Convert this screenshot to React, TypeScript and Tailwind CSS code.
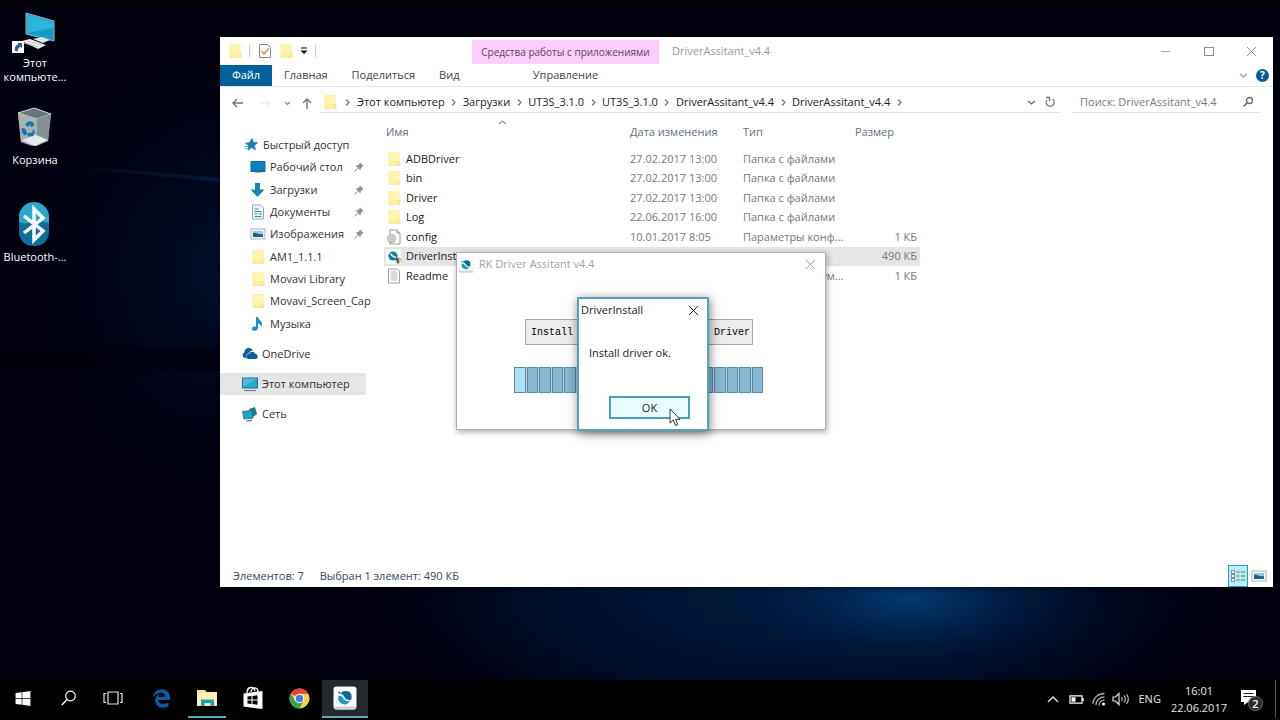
import type { ReactNode } from "react"
import { FaEdgeLegacy, FaWindows } from "react-icons/fa6"

type IconName =
  | "folder"
  | "config"
  | "app"
  | "text"
  | "star"
  | "desktop"
  | "download"
  | "document"
  | "picture"
  | "music"
  | "cloud"
  | "pc"
  | "network"

type FileRow = {
  name: string
  icon: IconName
  date: string
  type: string
  size: string
  selected?: boolean
}

const files: FileRow[] = [
  { name: "ADBDriver", icon: "folder", date: "27.02.2017 13:00", type: "Папка с файлами", size: "" },
  { name: "bin", icon: "folder", date: "27.02.2017 13:00", type: "Папка с файлами", size: "" },
  { name: "Driver", icon: "folder", date: "27.02.2017 13:00", type: "Папка с файлами", size: "" },
  { name: "Log", icon: "folder", date: "22.06.2017 16:00", type: "Папка с файлами", size: "" },
  { name: "config", icon: "config", date: "10.01.2017 8:05", type: "Параметры конф...", size: "1 КБ" },
  { name: "DriverInstall", icon: "app", date: "10.01.2017 8:08", type: "Приложение", size: "490 КБ", selected: true },
  { name: "Readme", icon: "text", date: "10.01.2017 8:05", type: "Текстовый докум...", size: "1 КБ" }
]

const quickAccess: { name: string; icon: IconName; pinned?: boolean }[] = [
  { name: "Рабочий стол", icon: "desktop", pinned: true },
  { name: "Загрузки", icon: "download", pinned: true },
  { name: "Документы", icon: "document", pinned: true },
  { name: "Изображения", icon: "picture", pinned: true },
  { name: "AM1_1.1.1", icon: "folder" },
  { name: "Movavi Library", icon: "folder" },
  { name: "Movavi_Screen_Cap", icon: "folder" },
  { name: "Музыка", icon: "music" }
]

const crumbs = ["Этот компьютер", "Загрузки", "UT3S_3.1.0", "UT3S_3.1.0", "DriverAssitant_v4.4", "DriverAssitant_v4.4"]

function Icon({ name }: { name: IconName }) {
  return (
    <svg viewBox="0 0 16 16" className="w-4 h-4 shrink-0" aria-hidden="true">
      {name === "folder" && (
        <>
          <path d="M2.500 1h11v14h-11z" fill="#fbefa0" />
          <path d="M2.500 1h10v9h-10z" fill="#fdf4b0" />
          <path d="M13 10h1.300v5H12z" fill="#f7e68c" />
          <path d="M2.500 14.300h11.500v.7H2.500z" fill="#f3e6a0" />
        </>
      )}
      {name === "config" && (
        <>
          <path d="M4 1h7l3 3v11H4z" fill="#fff" stroke="#9a9a9a" />
          <path d="M11 1v3h3" fill="none" stroke="#9a9a9a" />
          <circle cx="5.500" cy="9.500" r="4" fill="#e9ecec" stroke="#a0a8a8" />
          <path d="M3 8h5M3 10h5M4 12h3" stroke="#98a1a1" />
        </>
      )}
      {name === "app" && (
        <>
          <rect x="0" y="0" width="15" height="15" rx="2" fill="#fdfdfd" />
          <circle cx="7" cy="7" r="4.600" fill="#10809d" />
          <path d="M4 5.500c2-.8 2.500 3.500 6 2.500" stroke="#d8f1f7" strokeWidth="1.600" fill="none" />
          <path d="M10 9.500l2.500-1 2.500 1c0 3-1 4.500-2.500 5.500-1.500-1-2.500-2.500-2.500-5.500z" fill="#e3b63b" />
          <path d="M12.500 8.500V15c-1.500-1-2.500-2.500-2.500-5.500z" fill="#2a5c94" />
        </>
      )}
      {name === "text" && (
        <>
          <path d="M2.500 1h9l2 2v12h-11z" fill="#fff" stroke="#a2a2a2" />
          <path d="M4.500 4h6M4.500 6h7M4.500 8h7M4.500 10h7M4.500 12h7" stroke="#b4b4b4" />
        </>
      )}
      {name === "star" && (
        <>
          <path d="M9 1.500l1.500 4 4 .2-3.200 2.800 1.200 4.200L8.500 10.500 5 13.200l.8-4.300L2.500 6.200l4-.4z" fill="#1681ae" stroke="#1681ae" strokeWidth=".8" />
          <path d="M1 9.500h4M2 11.500h3" stroke="#6db6d2" />
        </>
      )}
      {name === "desktop" && (
        <>
          <rect x="0.500" y="2" width="15" height="11" rx="0.500" fill="#0a6fa8" />
          <path d="M1.500 3h13v8h-13z" fill="#0d7fbb" />
          <path d="M5 13h6" stroke="#5b6b75" />
        </>
      )}
      {name === "download" && <path d="M5 1h5v6.500h4.500L7.500 15 .5 7.500H5z" fill="#1784b3" />}
      {name === "document" && (
        <>
          <path d="M2.500 1h8l3 3v11h-11z" fill="#eef7fb" stroke="#8fabb8" />
          <path d="M4.500 5h4M4.500 7.500h7M4.500 10h3M9 10h3M4.500 12.500h7" stroke="#2f8fb5" strokeWidth="1.200" />
        </>
      )}
      {name === "picture" && (
        <>
          <rect x="1" y="3" width="14" height="10" fill="#f7fafb" stroke="#a8b7bd" />
          <path d="M3 5h10v6H3z" fill="#8fcbe6" />
          <path d="M3 7c3-1 5 2 10 1v3H3z" fill="#235f78" />
        </>
      )}
      {name === "music" && (
        <path
          d="M6 1h2c0 3 4 3 4 7 0 1-.4 2-1 3 0-2-1-3-3-3.500V12c0 1.600-1.500 2.800-3.200 2.800S2 14 2 12.700s1.300-2.200 3-2.200c.4 0 .7 0 1 .2z"
          fill="#1a8fc0"
        />
      )}
      {name === "cloud" && (
        <>
          <path d="M3 12a3 3 0 01-.5-5.800A4.500 4.500 0 0111 4.500c-2 0-3.500 1-4.200 2.800C4.500 7.500 3.500 9.500 4 12z" fill="#0c5f96" />
          <path d="M6.500 13a2.500 2.500 0 01.3-5A3.700 3.700 0 0113.500 8a2.600 2.600 0 01.5 5z" fill="#0c5f96" />
        </>
      )}
      {name === "pc" && (
        <>
          <rect x="0.500" y="2" width="15" height="10" fill="#2fa7ca" stroke="#2b6f8c" />
          <path d="M1 2.500h14L1 11z" fill="#4fbbd8" />
          <path d="M2 14.500h12" stroke="#6a8793" strokeWidth="1.200" />
        </>
      )}
      {name === "network" && (
        <>
          <path d="M7 3l6-2 2 7-4 3z" fill="#1b7f94" />
          <path d="M.5 5.500l9.500-1 1 7.500-9 1z" fill="#24a3c4" stroke="#1c6b88" strokeWidth=".8" />
          <path d="M4 15l6-.6" stroke="#4d7c8c" strokeWidth="1.200" />
        </>
      )}
    </svg>
  )
}

function Pin() {
  return (
    <svg viewBox="0 0 12 12" className="w-3 h-3 shrink-0" aria-hidden="true">
      <path d="M7 1.500l3.500 3.500-1 .5-1.700 1.700-.3 2.300L4.700 6.700 2.500 4.500l2.500-.3L6.600 2.500z" fill="#86959b" />
      <path d="M4.700 7.300L1.500 10.500" stroke="#86959b" />
    </svg>
  )
}

function Chevron({ className, d = "M3 1.500L6 4.500 3 7.500" }: { className: string; d?: string }) {
  return (
    <svg viewBox="0 0 9 9" className={`w-[9px] h-[9px] shrink-0 ${className}`} aria-hidden="true">
      <path d={d} fill="none" stroke="currentColor" strokeWidth="1.200" />
    </svg>
  )
}

function CloseGlyph() {
  return (
    <svg viewBox="0 0 11 11" className="w-[11px] h-[11px]" aria-hidden="true">
      <path d="M1 1l9 9M10 1l-9 9" stroke="currentColor" strokeWidth="1" />
    </svg>
  )
}

function Wallpaper() {
  return (
    <svg
      viewBox="0 0 1280 680"
      preserveAspectRatio="none"
      className="absolute inset-0 w-full h-full"
      aria-hidden="true"
    >
      <defs>
        <radialGradient id="glow">
          <stop offset="0" stopColor="#003a70" />
          <stop offset="0.300" stopColor="#002e60" stopOpacity="0.800" />
          <stop offset="1" stopColor="#001434" stopOpacity="0" />
        </radialGradient>
        <radialGradient id="haze">
          <stop offset="0" stopColor="#001c42" />
          <stop offset="0.600" stopColor="#00102c" stopOpacity="0.900" />
          <stop offset="1" stopColor="#000010" stopOpacity="0" />
        </radialGradient>
        <radialGradient id="dusk">
          <stop offset="0" stopColor="#00102a" />
          <stop offset="1" stopColor="#000010" stopOpacity="0" />
        </radialGradient>
        <linearGradient id="beam">
          <stop offset="0" stopColor="#021a38" stopOpacity="0" />
          <stop offset="1" stopColor="#021a38" />
        </linearGradient>
      </defs>
      <rect width="1280" height="680" fill="#00000f" />
      <ellipse cx="800" cy="590" rx="450" ry="170" fill="url(#haze)" />
      <ellipse cx="910" cy="598" rx="190" ry="75" fill="url(#glow)" />
      <ellipse cx="225" cy="270" rx="220" ry="250" fill="url(#dusk)" />
      <path d="M60 164L220 178V182L60 166z" fill="url(#beam)" />
      <rect y="347" width="220" height="24" fill="#00000c" opacity="0.600" />
      <rect width="1280" height="3" fill="#000000" />
    </svg>
  )
}

function Shortcut({ label, children }: { label: string; children: ReactNode }) {
  return (
    <button type="button" className="w-[70px] flex flex-col items-center text-[11px] leading-[14px] text-white">
      {children}
      <span className="mt-0.5 whitespace-pre-line">{label}</span>
    </button>
  )
}

function DesktopShortcuts() {
  return (
    <div className="relative flex flex-col items-start pt-2 w-[70px]">
      <div className="h-[97px]">
        <Shortcut label={"Этот\nкомпьюте..."}>
          <svg viewBox="0 0 48 46" className="w-12 h-[46px]" aria-hidden="true">
            <path d="M15 5l28 8v20l-28-7z" fill="#159bc8" stroke="#8fb9c6" />
            <path d="M16 6.500l26 7.500v6L16 25z" fill="#2eb3dc" />
            <path d="M22 31l9-2 8 3-7 3z" fill="#dfe6e8" />
            <path d="M11 33l8-2 16 6-8 4z" fill="#f1f3f4" />
            <path d="M13 35l15 4M16 33l15 4" stroke="#b9c1c4" />
            <rect x="1" y="33" width="12" height="12" fill="#fff" />
            <path d="M4 43c-.5-4 1-6 3-6.500V35h4v5l-1.500-1.300C7 39.500 7 41 7 43z" fill="#27618f" />
          </svg>
        </Shortcut>
      </div>
      <div className="h-[97px]">
        <Shortcut label="Корзина">
          <svg viewBox="0 0 40 46" className="w-10 h-[46px]" aria-hidden="true">
            <path d="M3 8l16-5 17 6-3 27-16 5L6 37z" fill="#9ea8aa" />
            <path d="M3 8l16-5 17 6-14 5z" fill="#66767a" stroke="#cfd6d8" />
            <path d="M3 8l19 6v27l-5-1L6 37z" fill="#a9b2b4" />
            <path d="M22 14l14-5-3 27-11 5z" fill="#838f92" />
            <path d="M7 35l14-5 12 5-13 6z" fill="#e6e9ea" />
            <path
              d="M10 19.500l3-3h4l2.500 3.500-3 2.200-1.500-2.200-2 2zM6.500 23l3.500.5 2.500 5.500-3 1.500-2.500-3zM12.500 31.500l.5-3.500 4.500-.5.5-4 2 3.500-2 4z"
              fill="#1274ad"
            />
          </svg>
        </Shortcut>
      </div>
      <Shortcut label="Bluetooth-...">
        <svg viewBox="0 0 32 46" className="w-8 h-[46px]" aria-hidden="true">
          <rect x="0" y="1" width="30" height="43" rx="14" fill="#0e6f9c" />
          <path d="M0 15a14 14 0 0130 0v6c-10-4-20 3-30-1z" fill="#2da6cb" />
          <path d="M5 14l19 15-9 9V7l9 9L5 31" fill="none" stroke="#fff" strokeWidth="3.500" />
        </svg>
      </Shortcut>
    </div>
  )
}

function TitleBar() {
  return (
    <div className="flex h-7 items-stretch">
      <div className="w-[252px] flex items-center pl-[7px] text-[#b4b4b4]">
        <Icon name="folder" />
        <span className="w-px h-3 bg-[#c8c8c8] ml-1.5 mr-2" />
        <svg viewBox="0 0 14 16" className="w-3.5 h-4" aria-hidden="true">
          <path d="M1.500 1.500h8l3 3v10h-11z" fill="#fff" stroke="#8a8a8a" />
          <path d="M3.500 8l2.500 3 5-6" stroke="#f08a60" strokeWidth="1.600" fill="none" />
        </svg>
        <span className="ml-1.5 flex">
          <Icon name="folder" />
        </span>
        <svg viewBox="0 0 8 8" className="w-2 h-2 ml-1.5 text-black" aria-hidden="true">
          <path d="M1 1h6" stroke="currentColor" />
          <path d="M.5 3.500h7L4 7z" fill="currentColor" />
        </svg>
        <span className="w-px h-3 bg-[#c8c8c8] ml-[7px]" />
      </div>
      <div className="w-[187px] mt-[3px] mb-px bg-[#fccdf8] text-[10px] text-[#5d4460] flex items-center justify-center whitespace-nowrap">
        Средства работы с приложениями
      </div>
      <div className="flex-1 pl-[13px] flex items-center text-[#9b9b9b]">DriverAssitant_v4.4</div>
      <div className="flex text-[#929292]">
        <button type="button" aria-label="Свернуть" className="w-[43px] flex items-center justify-center">
          <span className="w-[9px] h-px bg-[#a5a5a5]" />
        </button>
        <button type="button" aria-label="Развернуть" className="w-[43px] flex items-center justify-center">
          <span className="w-2.5 h-[9px] border border-[#8d8d8d]" />
        </button>
        <button type="button" aria-label="Закрыть" className="w-[43px] flex items-center justify-center">
          <CloseGlyph />
        </button>
      </div>
    </div>
  )
}

function RibbonTabs() {
  return (
    <div className="flex h-[22px] border-b border-[#e8e8e8] text-[#444]">
      <div className="w-[252px] flex">
        <button type="button" className="w-[52px] shrink-0 bg-[#00619b] text-white">Файл</button>
        <button type="button" className="px-3 shrink-0">Главная</button>
        <button type="button" className="px-3 shrink-0">Поделиться</button>
        <button type="button" className="px-3 shrink-0">Вид</button>
      </div>
      <button type="button" className="w-[187px]">Управление</button>
      <div className="flex-1 flex items-center justify-end gap-2 pr-1">
        <Chevron className="text-[#999]" d="M1 3l3.500 3L8 3" />
        <button
          type="button"
          aria-label="Справка"
          className="w-[13px] h-[13px] rounded-full bg-[#005f96] text-white text-[10px] leading-[13px] font-bold"
        >
          ?
        </button>
      </div>
    </div>
  )
}

function AddressBar() {
  return (
    <div className="flex h-[31px] items-center pr-[13px]">
      <div className="w-[100px] flex items-center text-[#666] pl-3">
        <svg viewBox="0 0 88 12" className="w-[88px] h-3" aria-hidden="true">
          <path d="M11 6H1M5 2L1 6l4 4" fill="none" stroke="#777" strokeWidth="1.400" />
          <path d="M28 6h10M34.500 2.500L38 6l-3.500 3.500" fill="none" stroke="#e2e2e2" />
          <path d="M53 5l2.500 2.500L58 5" fill="none" stroke="#888" strokeWidth="1.200" />
          <path d="M75 12V2M71 6l4-4 4 4" fill="none" stroke="#777" strokeWidth="1.400" />
        </svg>
      </div>
      <nav className="flex-1 h-[21px] flex items-center border-b border-[#e4e4e4] pl-0.5 text-[#222] whitespace-nowrap">
        <Icon name="folder" />
        <span className="w-[19px] flex justify-center text-[#777]">
          <Chevron className="" />
        </span>
        {crumbs.map((crumb, i) => (
          <span key={i} className="flex items-center">
            <a href="#">{crumb}</a>
            <span className="w-[18px] flex justify-center text-[#777]">
              <Chevron className="" />
            </span>
          </span>
        ))}
        <span className="flex-1" />
        <Chevron className="text-[#666]" d="M1 3l3.500 3L8 3" />
        <svg viewBox="0 0 12 12" className="w-3 h-3 ml-2 mr-1" aria-hidden="true">
          <path d="M8.500 3A4 4 0 112.800 4M2 1.500h3.500V5" fill="none" stroke="#777" strokeWidth="1.300" />
        </svg>
      </nav>
      <label className="ml-3 w-[188px] h-[21px] flex items-center border-b border-[#e4e4e4] pl-2 pr-1.5">
        <input
          type="text"
          aria-label="Поиск"
          placeholder="Поиск: DriverAssitant_v4.4"
          className="flex-1 min-w-0 bg-transparent outline-none placeholder:text-[#7a7a7a]"
        />
        <svg viewBox="0 0 12 12" className="w-3 h-3" aria-hidden="true">
          <circle cx="7.500" cy="4.500" r="3" fill="none" stroke="#666" strokeWidth="1.300" />
          <path d="M5.300 6.700L1.500 10.500" stroke="#666" strokeWidth="1.500" />
        </svg>
      </label>
    </div>
  )
}

function Sidebar() {
  return (
    <aside className="w-[146px] shrink-0 pt-4 flex flex-col gap-2 text-[#333] whitespace-nowrap">
      <div className="grid grid-cols-1 grid-rows-9 h-[201px]">
        <a href="#" className="flex items-center gap-1 pl-[23px]">
          <Icon name="star" />
          Быстрый доступ
        </a>
        {quickAccess.map((item) => (
          <a key={item.name} href="#" className="flex items-center gap-1 pl-[30px]">
            <Icon name={item.icon} />
            <span className="flex-1">{item.name}</span>
            {item.pinned && (
              <span className="pr-px">
                <Pin />
              </span>
            )}
          </a>
        ))}
      </div>
      <a href="#" className="h-[22px] flex items-center gap-1 pl-[22px]">
        <Icon name="cloud" />
        OneDrive
      </a>
      <a href="#" className="h-[22px] flex items-center gap-1 pl-[22px] bg-[#e5e5e5]">
        <Icon name="pc" />
        Этот компьютер
      </a>
      <a href="#" className="h-[22px] flex items-center gap-1 pl-[22px]">
        <Icon name="network" />
        Сеть
      </a>
    </aside>
  )
}

function FileList() {
  return (
    <div className="relative flex-1 pl-[18px]">
      <Chevron className="absolute left-[132px] top-0 text-[#999]" d="M1 6l3.500-3L8 6" />
      <table className="table-fixed w-[536px] h-[168px] border-collapse text-left whitespace-nowrap text-[#777]">
        <colgroup>
          <col className="w-[246px]" />
          <col className="w-[113px]" />
          <col className="w-[112px]" />
          <col className="w-[65px]" />
        </colgroup>
        <thead>
          <tr className="h-[31px] text-[#5f6f82]">
            <th className="p-0 pb-0.5 pl-0.5 font-normal">Имя</th>
            <th className="p-0 pb-0.5 font-normal">Дата изменения</th>
            <th className="p-0 pb-0.5 font-normal">Тип</th>
            <th className="p-0 pb-0.5 font-normal">Размер</th>
          </tr>
        </thead>
        <tbody>
          {files.map((file) => (
            <tr key={file.name} className={file.selected ? "bg-[#e5e5e5]" : ""}>
              <td className="p-0 pl-0.5">
                <span className="flex items-center gap-1 text-[#222]">
                  <Icon name={file.icon} />
                  {file.name}
                </span>
              </td>
              <td className="p-0">{file.date}</td>
              <td className="p-0">{file.type}</td>
              <td className="p-0 pr-[3px] text-right">{file.size}</td>
            </tr>
          ))}
        </tbody>
      </table>
    </div>
  )
}

function ExplorerWindow() {
  return (
    <section className="absolute left-[220px] right-[7px] top-[37px] bottom-[93px] bg-white flex flex-col shadow-[0_1px_5px_rgba(0,0,0,0.5)]">
      <TitleBar />
      <RibbonTabs />
      <AddressBar />
      <div className="flex-1 min-h-0 flex">
        <Sidebar />
        <FileList />
      </div>
      <footer className="h-[22px] flex items-center pl-[13px] pr-[6px] text-[#36495c]">
        <span>Элементов: 7</span>
        <span className="ml-4">Выбран 1 элемент: 490 КБ</span>
        <button
          type="button"
          aria-label="Таблица"
          className="ml-auto w-5 h-[22px] bg-[#b8eef8] border border-[#2b9db8] flex items-center justify-center"
        >
          <svg viewBox="0 0 16 14" className="w-4 h-3.5" aria-hidden="true">
            <path d="M1.500 1.500h3v3h-3zM1.500 5.500h3v3h-3zM1.500 9.500h3v3h-3z" fill="#fff" stroke="#7c8b90" />
            <path d="M6.500 3h3M11 3h4M6.500 7h3M11 7h4M6.500 11h3M11 11h4" stroke="#5c7077" />
          </svg>
        </button>
        <button type="button" aria-label="Эскизы" className="ml-[3px]">
          <Icon name="picture" />
        </button>
      </footer>
    </section>
  )
}

function AppLogo({ className }: { className: string }) {
  return (
    <svg viewBox="0 0 24 24" className={className} aria-hidden="true">
      <rect x="0.500" y="0.500" width="23" height="23" rx="3" fill="#f9fafb" />
      <path d="M1 20.500h22v1a2 2 0 01-2 2H3a2 2 0 01-2-2z" fill="#cfd3dc" />
      <path d="M7 8C9 4.500 15 3.800 18 7.500c.8 2 .9 4 .2 6.500C15 14.500 12.500 13 11.500 11S9 7.800 7 8z" fill="#0b6a8f" />
      <path d="M5.500 10c2-.8 3.500.4 4.800 2.300S13.500 15.700 17 15.300c-1.500 2.700-5 4-8 2.500S4.500 13 5.500 10z" fill="#1d9bbd" />
      <circle cx="6.200" cy="6.500" r="1" fill="#0b6a8f" />
    </svg>
  )
}

function InstallerWindow() {
  return (
    <section className="absolute left-[456px] top-[252px] w-[370px] h-[178px] bg-white border border-[#b0b0b0] shadow-[1px_2px_6px_rgba(0,0,0,0.35)]">
      <header className="h-[23px] flex items-center pl-px text-[#a3a3a3]">
        <AppLogo className="w-4 h-4" />
        <span className="ml-[5px] flex-1">RK Driver Assitant v4.4</span>
        <button type="button" aria-label="Закрыть" className="mr-[9px]">
          <CloseGlyph />
        </button>
      </header>
      <div className="mt-[43px] ml-[68px] mr-[72px] flex justify-between font-['Liberation_Mono',monospace] text-[10px] text-black whitespace-nowrap">
        <button type="button" className="h-[26px] px-[5px] bg-[#ececec] border border-[#a8a8a8]">Install Driver</button>
        <button type="button" className="h-[26px] px-0.5 bg-[#ececec] border border-[#a8a8a8]">Uninstall Driver</button>
      </div>
      <div
        role="progressbar"
        aria-label="Install progress"
        className="mt-[22px] ml-[57px] w-[249px] h-[26px] flex gap-px bg-[#b5d3e2]"
      >
        {Array.from({ length: 20 }, (_, i) => (
          <span
            key={i}
            className={`flex-1 border border-[#5c8ba8] ${i === 0 ? "bg-[#aee0fb]" : "bg-[#88b8d2]"}`}
          />
        ))}
      </div>
    </section>
  )
}

function MessageBox() {
  return (
    <section
      role="dialog"
      aria-label="DriverInstall"
      className="absolute left-[577px] top-[297px] w-[132px] h-[134px] bg-white border-2 border-[#55a3bb] shadow-[1px_2px_10px_rgba(0,0,0,0.5)] flex flex-col text-[#222]"
    >
      <header className="h-[23px] flex items-center justify-between pl-0.5 pr-2">
        <span>DriverInstall</span>
        <button type="button" aria-label="Закрыть">
          <CloseGlyph />
        </button>
      </header>
      <p className="mt-[23px] pl-2.5 leading-4">Install driver ok.</p>
      <button
        type="button"
        className="mt-auto mb-2.5 ml-[30px] w-[81px] h-[23px] bg-[#e8fdff] border-2 border-[#4a9fba] leading-[18px]"
      >
        OK
      </button>
    </section>
  )
}

function Cursor() {
  return (
    <svg viewBox="0 0 12 19" className="absolute left-[669px] top-[408px] w-3 h-[19px]" aria-hidden="true">
      <path d="M1 1v14l3.300-3 2.200 5.500 2.300-1-2.200-5.200H11z" fill="#fff" stroke="#333" />
    </svg>
  )
}

function TaskButton({ label, className = "", children }: { label: string; className?: string; children: ReactNode }) {
  return (
    <button
      type="button"
      aria-label={label}
      className={`w-[46px] h-[38px] flex items-center justify-center border-b-2 ${className || "border-transparent"}`}
    >
      {children}
    </button>
  )
}

function Taskbar() {
  return (
    <footer className="relative h-10 shrink-0 bg-black text-white flex items-start">
      <div className="flex">
        <TaskButton label="Пуск">
          <FaWindows className="w-4 h-[17px]" />
        </TaskButton>
        <TaskButton label="Поиск">
          <svg viewBox="0 0 16 16" className="w-4 h-4" aria-hidden="true">
            <circle cx="9.500" cy="6" r="4.800" fill="none" stroke="#fff" strokeWidth="1.200" />
            <path d="M6 9.500L.8 15" stroke="#fff" strokeWidth="1.400" />
          </svg>
        </TaskButton>
        <TaskButton label="Представление задач">
          <svg viewBox="0 0 20 14" className="w-5 h-3.5 mr-1" aria-hidden="true">
            <path d="M5 1h10v12H5zM3 2.500H1v9h2M17 2.500h2v9h-2" fill="none" stroke="#e8e8e8" strokeWidth="1.200" />
          </svg>
        </TaskButton>
        <TaskButton label="Edge">
          <FaEdgeLegacy className="w-[19px] h-[19px] text-[#0a5ba3]" />
        </TaskButton>
        <div className="px-1">
          <button
            type="button"
            aria-label="Проводник"
            className="w-[38px] h-[38px] flex items-center justify-center border-b-2 border-[#4fa9c8]"
          >
            <svg viewBox="0 0 22 18" className="w-[22px] h-[18px]" aria-hidden="true">
              <path d="M1 1h8l1.500 2H21v14H1z" fill="#fbe79a" />
              <path d="M2 4h18v12H2z" fill="#fdf1b6" />
              <path d="M5 10.500h13V17h-3.500v-3h-6v3H5z" fill="#1ba0b4" />
            </svg>
          </button>
        </div>
        <TaskButton label="Магазин">
          <svg viewBox="0 0 22 24" className="w-[22px] h-6" aria-hidden="true">
            <path d="M5 7c0-7 7-7 8-2M9 6c1-6 7-5 7 0" fill="none" stroke="#fff" strokeWidth="1.300" />
            <path d="M1.500 7.500L20.500 5v18L1.500 20.500z" fill="#fff" />
            <path d="M5.500 10.500l4-.5v3.500h-4zM10.500 10l5-.7v4.200h-5zM5.500 14.500h4V18l-4-.5zM10.500 14.500h5v4.200l-5-.6z" fill="#000" />
          </svg>
        </TaskButton>
        <TaskButton label="Chrome">
          <svg viewBox="0 0 22 22" className="w-[21px] h-[21px]" aria-hidden="true">
            <circle cx="11" cy="11" r="10.500" fill="#f7d04a" />
            <path d="M11 11L1.900 5.800A10.500 10.500 0 0120.200 6H11z" fill="#e0443b" />
            <path d="M11 21.500A10.500 10.500 0 011.900 5.800L7 14.500l8.300-1.500z" fill="#35a156" />
            <circle cx="11" cy="11" r="5" fill="#fff" />
            <circle cx="11" cy="11" r="3.900" fill="#3f7fdb" />
          </svg>
        </TaskButton>
        <TaskButton label="RK Driver Assitant v4.4" className="bg-[#24292d] border-[#4fa9c8]">
          <AppLogo className="w-6 h-6" />
        </TaskButton>
      </div>

      <div className="ml-auto h-[38px] flex items-center text-[11px] text-[#e6e6e6]">
        <button type="button" aria-label="Скрытые значки">
          <svg viewBox="0 0 12 8" className="w-3 h-2" aria-hidden="true">
            <path d="M1 7l5-5 5 5" fill="none" stroke="currentColor" strokeWidth="1.300" />
          </svg>
        </button>
        <svg viewBox="0 0 15 9" className="w-[15px] h-[9px] ml-2.5" aria-hidden="true">
          <path d="M1 .8h12v7.400H1z" fill="none" stroke="#fff" strokeWidth="1.200" />
          <path d="M2.500 2.300h4v4.400h-4z" fill="#fff" />
          <path d="M14 3v3" stroke="#fff" strokeWidth="1.500" />
        </svg>
        <svg viewBox="0 0 14 14" className="w-3.5 h-3.5 ml-2" aria-hidden="true">
          <path
            d="M1 12C1 6 6 1.500 12.500 1.500M4 13C4 8.500 7.500 5 12.500 5M7 13.500C7 10.500 9.500 8 12.500 8"
            fill="none"
            stroke="#a8a8a8"
            strokeWidth="1.300"
          />
          <circle cx="11.500" cy="12" r="1.500" fill="#fff" />
        </svg>
        <svg viewBox="0 0 18 14" className="w-[18px] h-3.5 ml-1.5" aria-hidden="true">
          <path d="M1 5h2.500L7 1.500v11L3.500 9H1z" fill="none" stroke="#ddd" strokeWidth="1.200" />
          <path d="M9.500 5c.8 1.200.8 2.800 0 4M12 3.500c1.500 2 1.500 5 0 7M14.500 2c2.200 3 2.200 7 0 10" fill="none" stroke="#bbb" strokeWidth="1.200" />
        </svg>
        <span className="ml-2">ENG</span>
        <div className="ml-2.5 text-center leading-[17px]">
          <div>16:01</div>
          <div>22.06.2017</div>
        </div>
        <button type="button" aria-label="Центр уведомлений" className="ml-3">
          <svg viewBox="0 0 24 24" className="w-6 h-6" aria-hidden="true">
            <path d="M2 3h15v12H9l-4 3v-3H2z" fill="#fff" />
            <path d="M4.500 6.500h10M4.500 9.500h10" stroke="#222" strokeWidth="1.200" />
            <circle cx="16.500" cy="16.500" r="7" fill="#2b2b2b" stroke="#6b6b6b" />
            <text x="16.500" y="20.500" textAnchor="middle" fontSize="11" fontWeight="600" fill="#fff">2</text>
          </svg>
        </button>
        <span className="ml-3 mr-1 w-px h-[38px] bg-[#555]" />
      </div>
    </footer>
  )
}

export default function App() {
  return (
    <div className="h-screen flex flex-col overflow-hidden bg-black font-['Open_Sans','Noto_Sans',sans-serif] text-[11px]">
      <main className="relative flex-1 min-h-0">
        <Wallpaper />
        <DesktopShortcuts />
        <ExplorerWindow />
        <InstallerWindow />
        <MessageBox />
        <Cursor />
      </main>
      <Taskbar />
    </div>
  )
}
